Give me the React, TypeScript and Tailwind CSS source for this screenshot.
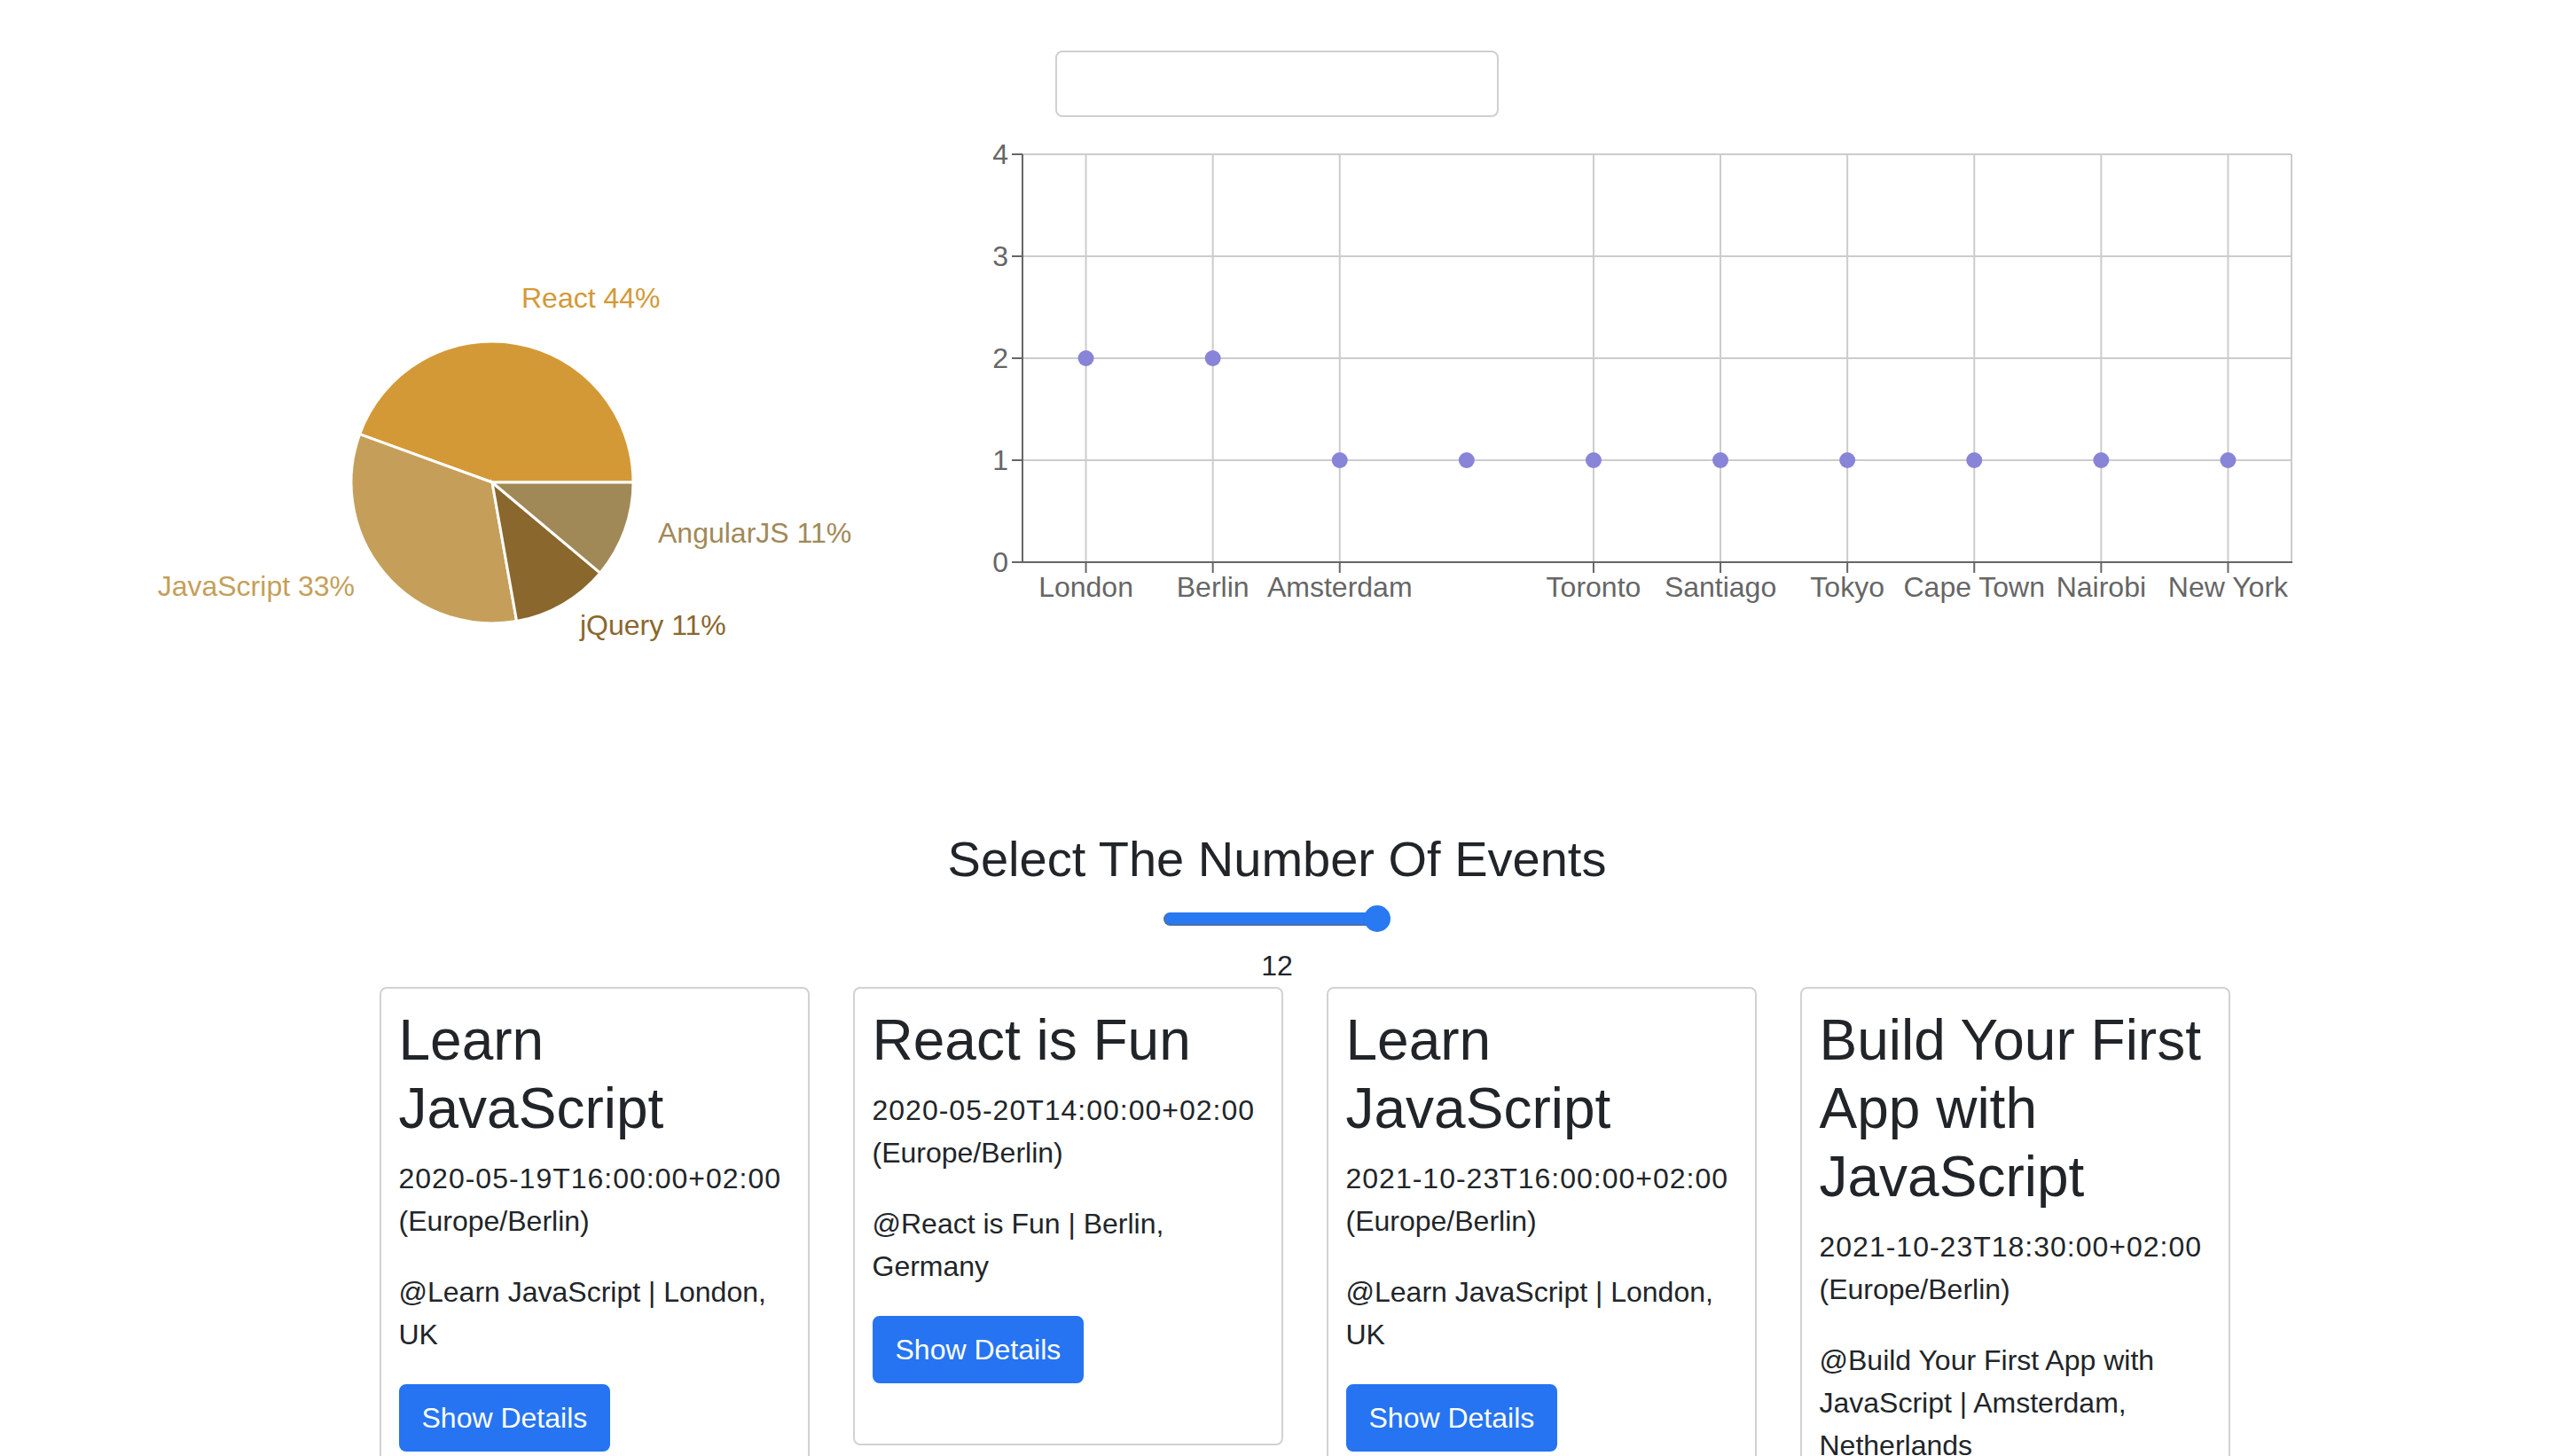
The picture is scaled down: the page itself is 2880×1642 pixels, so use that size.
import React from "react";

const pieData = [
  { name: "React", value: 4, color: "#d49937", label: "React 44%", x: 588, y: 336, anchor: "start" },
  { name: "JavaScript", value: 3, color: "#c59f59", label: "JavaScript 33%", x: 400, y: 661, anchor: "end" },
  { name: "jQuery", value: 1, color: "#8a672d", label: "jQuery 11%", x: 654, y: 705, anchor: "start" },
  { name: "AngularJS", value: 1, color: "#a18957", label: "AngularJS 11%", x: 742, y: 601, anchor: "start" },
];

const cityData = [
  { city: "London", count: 2 },
  { city: "Berlin", count: 2 },
  { city: "Amsterdam", count: 1 },
  { city: "", count: 1 },
  { city: "Toronto", count: 1 },
  { city: "Santiago", count: 1 },
  { city: "Tokyo", count: 1 },
  { city: "Cape Town", count: 1 },
  { city: "Nairobi", count: 1 },
  { city: "New York", count: 1 },
];

const events = [
  {
    title: "Learn JavaScript",
    start: "2020-05-19T16:00:00+02:00",
    location: "@Learn JavaScript | London, UK",
  },
  {
    title: "React is Fun",
    start: "2020-05-20T14:00:00+02:00",
    location: "@React is Fun | Berlin, Germany",
  },
  {
    title: "Learn JavaScript",
    start: "2021-10-23T16:00:00+02:00",
    location: "@Learn JavaScript | London, UK",
  },
  {
    title: "Build Your First App with JavaScript",
    start: "2021-10-23T18:30:00+02:00",
    location: "@Build Your First App with JavaScript | Amsterdam, Netherlands",
  },
];

function GenrePie() {
  const cx = 555;
  const cy = 544;
  const r = 159;
  const total = pieData.reduce((s, d) => s + d.value, 0);
  let angle = 0;

  const point = (deg: number) => {
    const rad = (deg * Math.PI) / 180;
    return [cx + r * Math.cos(rad), cy - r * Math.sin(rad)];
  };

  return (
    <svg width={1100} height={935} viewBox="0 0 1100 935">
      {pieData.map((d) => {
        const start = angle;
        const end = angle + (d.value / total) * 360;
        angle = end;
        const [x1, y1] = point(start);
        const [x2, y2] = point(end);
        const large = end - start > 180 ? 1 : 0;
        return (
          <path
            key={d.name}
            d={`M${cx},${cy} L${x1},${y1} A${r},${r} 0 ${large} 0 ${x2},${y2} Z`}
            fill={d.color}
            stroke="#fff"
            strokeWidth={3}
          />
        );
      })}
      {pieData.map((d) => (
        <text
          key={d.label}
          x={d.x}
          y={d.y}
          fill={d.color}
          fontSize={32}
          textAnchor={d.anchor as "start" | "end"}
          dominantBaseline="central"
        >
          {d.label}
        </text>
      ))}
    </svg>
  );
}

function CityScatter() {
  const left = 53;
  const right = 1484;
  const top = 34;
  const bottom = 494;
  const step = (right - left) / cityData.length;
  const yOf = (v: number) => bottom - v * 115;

  return (
    <svg width={1540} height={600} viewBox="0 0 1540 600" className="mt-[8px]">
      {/* grid */}
      {[0, 1, 2, 3, 4].map((v) => (
        <line key={v} x1={left} x2={right} y1={yOf(v)} y2={yOf(v)} stroke="#cccccc" strokeWidth={2} />
      ))}
      {cityData.map((d, i) =>
        d.city ? (
          <line
            key={i}
            x1={left + step * (i + 0.5)}
            x2={left + step * (i + 0.5)}
            y1={top}
            y2={bottom}
            stroke="#cccccc"
            strokeWidth={2}
          />
        ) : null
      )}
      <line x1={right} x2={right} y1={top} y2={bottom} stroke="#cccccc" strokeWidth={2} />

      {/* y axis */}
      <line x1={left} x2={left} y1={top} y2={bottom + 1} stroke="#666666" strokeWidth={2} />
      {[0, 1, 2, 3, 4].map((v) => (
        <g key={v}>
          <line x1={left - 12} x2={left} y1={yOf(v)} y2={yOf(v)} stroke="#666666" strokeWidth={2} />
          <text x={37} y={yOf(v)} fill="#666666" fontSize={32} textAnchor="end" dominantBaseline="central">
            {v}
          </text>
        </g>
      ))}

      {/* x axis */}
      <line x1={left} x2={right + 1} y1={bottom} y2={bottom} stroke="#666666" strokeWidth={2} />
      {cityData.map((d, i) => {
        if (!d.city) return null;
        const x = left + step * (i + 0.5);
        return (
          <g key={i}>
            <line x1={x} x2={x} y1={bottom} y2={bottom + 12} stroke="#666666" strokeWidth={2} />
            <text x={x} y={533} fill="#666666" fontSize={32} textAnchor="middle">
              {d.city}
            </text>
          </g>
        );
      })}

      {/* points */}
      {cityData.map((d, i) => (
        <circle key={i} cx={left + step * (i + 0.5)} cy={yOf(d.count)} r={9} fill="#8884d8" />
      ))}
    </svg>
  );
}

function EventCard({ title, start, location }: { title: string; start: string; location: string }) {
  return (
    <div className="w-[485px] shrink-0 rounded-[8px] border-2 border-[#d2d2d2] bg-white pt-[20px] pl-[20px] pr-[14px] pb-[20px]">
      <h2 className="mb-[16px] text-[64px] leading-[1.2] font-medium">{title}</h2>
      <p className="mb-[32px] text-[32px] leading-[1.5]">
        <span className="tracking-[1px]">{start}</span> (Europe/Berlin)
      </p>
      <p className="mb-[32px] text-[32px] leading-[1.5]">{location}</p>
      <button className="mb-[48px] rounded-[8px] border-2 border-[#2674f2] bg-[#2674f2] px-[24px] py-[12px] text-[32px] leading-[48px] text-white">
        Show Details
      </button>
    </div>
  );
}

export default function App() {
  return (
    <div className="min-h-screen bg-white font-['Liberation_Sans',Arial,sans-serif] text-[#212529]">
      <div className="flex h-[935px]">
        <div className="w-[1100px] shrink-0">
          <GenrePie />
        </div>
        <div className="flex flex-col">
          <input
            type="text"
            className="mt-[57px] ml-[90px] h-[75px] w-[500px] rounded-[8px] border-2 border-[#d0d0d0] bg-white outline-none"
          />
          <CityScatter />
        </div>
      </div>

      <h3 className="mb-[16px] text-center text-[56px] leading-[1.2] font-medium">Select The Number Of Events</h3>

      <div className="flex h-[47px] justify-center pt-[3px]">
        <div className="flex h-[30px] items-center">
          <div className="h-[15px] w-[245px] rounded-full border-b-2 border-l-2 border-[#4a6fa8] bg-[#2979f2]" />
          <div className="-ml-[19px] h-[30px] w-[30px] rounded-full bg-[#2979f2]" />
        </div>
      </div>

      <div className="text-center text-[32px] leading-[48px]">12</div>

      <div className="flex items-start justify-center gap-[49px] pl-[62px]">
        {events.map((e, i) => (
          <EventCard key={i} {...e} />
        ))}
      </div>
    </div>
  );
}
